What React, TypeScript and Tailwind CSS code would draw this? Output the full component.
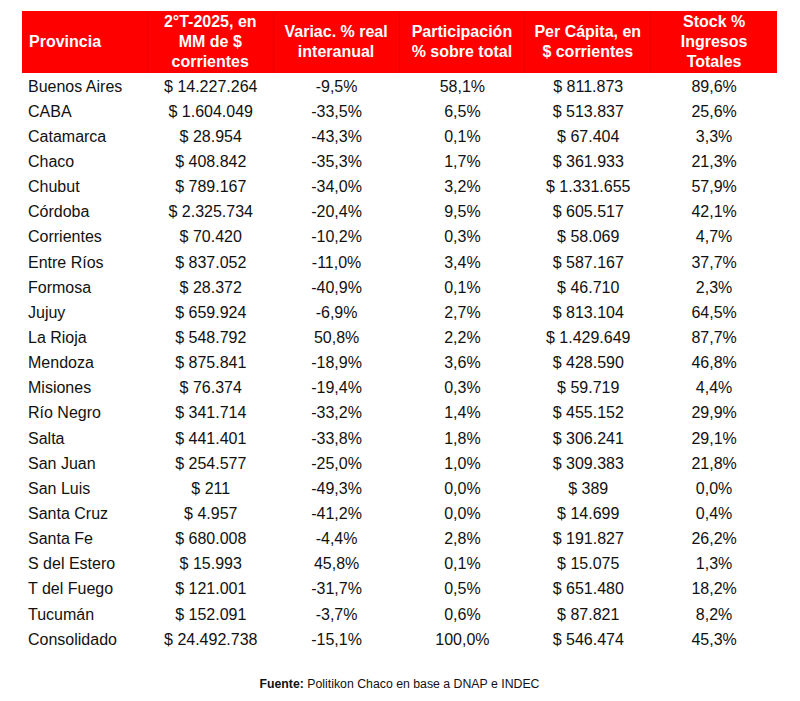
const rows: string[][] = [
  ["Buenos Aires", "$ 14.227.264", "-9,5%", "58,1%", "$ 811.873", "89,6%"],
  ["CABA", "$ 1.604.049", "-33,5%", "6,5%", "$ 513.837", "25,6%"],
  ["Catamarca", "$ 28.954", "-43,3%", "0,1%", "$ 67.404", "3,3%"],
  ["Chaco", "$ 408.842", "-35,3%", "1,7%", "$ 361.933", "21,3%"],
  ["Chubut", "$ 789.167", "-34,0%", "3,2%", "$ 1.331.655", "57,9%"],
  ["Córdoba", "$ 2.325.734", "-20,4%", "9,5%", "$ 605.517", "42,1%"],
  ["Corrientes", "$ 70.420", "-10,2%", "0,3%", "$ 58.069", "4,7%"],
  ["Entre Ríos", "$ 837.052", "-11,0%", "3,4%", "$ 587.167", "37,7%"],
  ["Formosa", "$ 28.372", "-40,9%", "0,1%", "$ 46.710", "2,3%"],
  ["Jujuy", "$ 659.924", "-6,9%", "2,7%", "$ 813.104", "64,5%"],
  ["La Rioja", "$ 548.792", "50,8%", "2,2%", "$ 1.429.649", "87,7%"],
  ["Mendoza", "$ 875.841", "-18,9%", "3,6%", "$ 428.590", "46,8%"],
  ["Misiones", "$ 76.374", "-19,4%", "0,3%", "$ 59.719", "4,4%"],
  ["Río Negro", "$ 341.714", "-33,2%", "1,4%", "$ 455.152", "29,9%"],
  ["Salta", "$ 441.401", "-33,8%", "1,8%", "$ 306.241", "29,1%"],
  ["San Juan", "$ 254.577", "-25,0%", "1,0%", "$ 309.383", "21,8%"],
  ["San Luis", "$ 211", "-49,3%", "0,0%", "$ 389", "0,0%"],
  ["Santa Cruz", "$ 4.957", "-41,2%", "0,0%", "$ 14.699", "0,4%"],
  ["Santa Fe", "$ 680.008", "-4,4%", "2,8%", "$ 191.827", "26,2%"],
  ["S del Estero", "$ 15.993", "45,8%", "0,1%", "$ 15.075", "1,3%"],
  ["T del Fuego", "$ 121.001", "-31,7%", "0,5%", "$ 651.480", "18,2%"],
  ["Tucumán", "$ 152.091", "-3,7%", "0,6%", "$ 87.821", "8,2%"],
  ["Consolidado", "$ 24.492.738", "-15,1%", "100,0%", "$ 546.474", "45,3%"],
];

const headers: string[][] = [
  ["Provincia"],
  ["2°T-2025, en", "MM de $", "corrientes"],
  ["Variac. % real", "interanual"],
  ["Participación", "% sobre total"],
  ["Per Cápita, en", "$ corrientes"],
  ["Stock %", "Ingresos", "Totales"],
];

export default function App() {
  return (
    <div
      className="w-[800px] h-[701px] bg-white text-[#111] pt-[11px] pl-[22px]"
      style={{ fontFamily: '"Liberation Sans", Arial, sans-serif' }}
    >
      <div className="w-[755px]">
        <div className="grid grid-cols-6 h-[62px] bg-[#fe0000] text-white font-bold text-[16px] leading-[20px]">
          {headers.map((h, i) => (
            <div
              key={i}
              className={
                "flex flex-col justify-center " +
                (i === 0 ? "items-start pl-[7px] " : "items-center text-center ") +
                (i < 5 ? "border-r border-[#ec0000]" : "")
              }
            >
              {h.map((line, j) => (
                <span key={j}>{line}</span>
              ))}
            </div>
          ))}
        </div>
        <div className="pt-[1px]">
          {rows.map((r, i) => (
            <div key={i} className="grid grid-cols-6 h-[25.15px] items-center text-[16px] leading-[20px]">
              {r.map((c, j) => (
                <div key={j} className={j === 0 ? "pl-[6px]" : "text-center"}>
                  {c}
                </div>
              ))}
            </div>
          ))}
        </div>
      </div>
      <div className="mt-[23px] text-[12.3px] text-center w-[755px]">
        <span className="font-bold">Fuente:</span> Politikon Chaco en base a DNAP e INDEC
      </div>
    </div>
  );
}
